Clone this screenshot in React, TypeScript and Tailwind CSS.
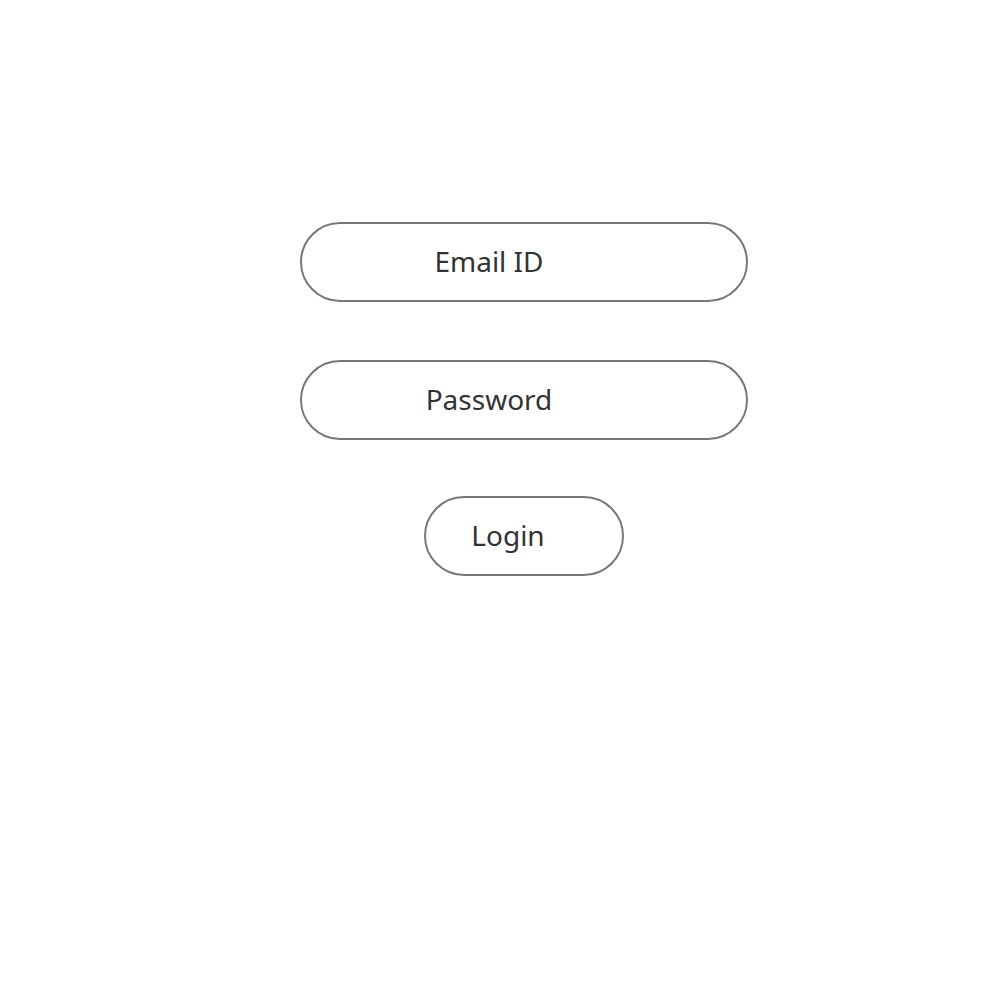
import React from "react";

export default function App() {
  return (
    <div className="w-[1008px] h-[1004px] bg-white flex flex-col items-center pt-[222px]">
      <div className="flex flex-col items-center" style={{ fontFamily: '"Noto Sans", "Liberation Sans", sans-serif' }}>
        <div className="ml-[39px] w-[448px] h-[80px] rounded-full border-2 border-[#777777] flex items-center justify-center pr-[69px] pb-[3px] text-[28px] leading-none text-[#333333]">
          Email ID
        </div>
        <div className="ml-[39px] mt-[58px] w-[448px] h-[80px] rounded-full border-2 border-[#777777] flex items-center justify-center pr-[69px] pb-[3px] text-[28px] leading-none text-[#333333]">
          Password
        </div>
        <div className="ml-[39px] mt-[56px] w-[200px] h-[80px] rounded-full border-2 border-[#777777] flex items-center justify-center pr-[31px] pb-[3px] text-[28px] leading-none text-[#333333]">
          Login
        </div>
      </div>
    </div>
  );
}
